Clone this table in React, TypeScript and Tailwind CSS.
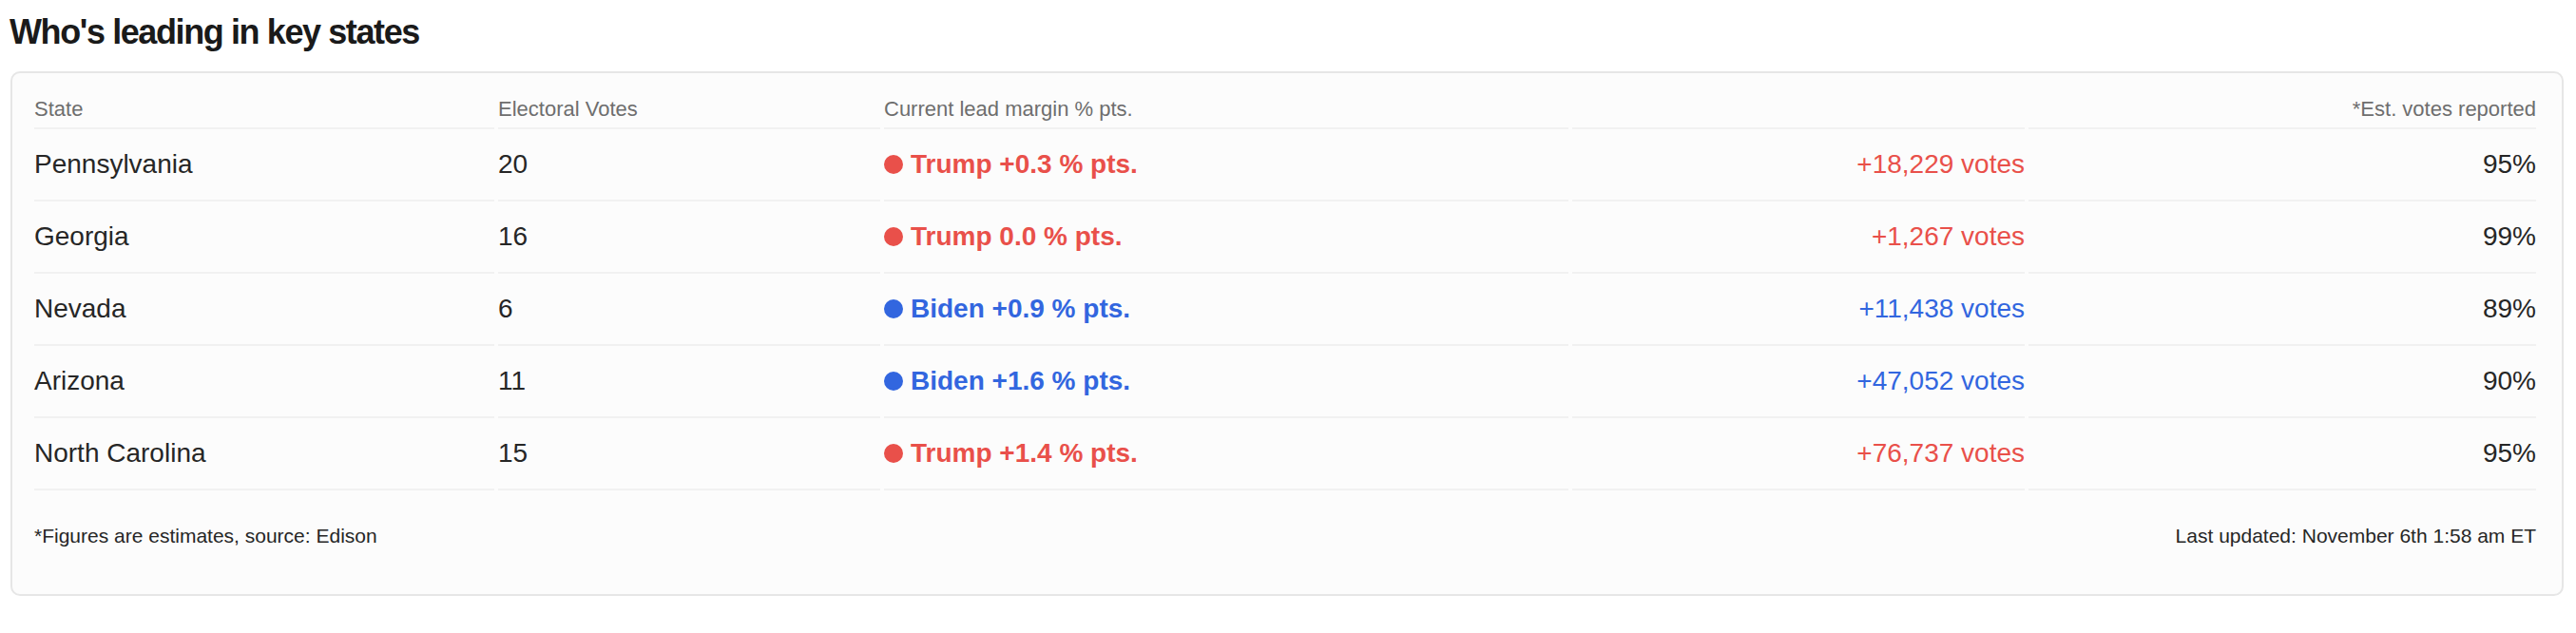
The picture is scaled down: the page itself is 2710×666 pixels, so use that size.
const rows = [
  { state: 'Pennsylvania', ev: 20, who: 'Trump', margin: '+0.3', votes: '+18,229', pct: '95%' },
  { state: 'Georgia', ev: 16, who: 'Trump', margin: '0.0', votes: '+1,267', pct: '99%' },
  { state: 'Nevada', ev: 6, who: 'Biden', margin: '+0.9', votes: '+11,438', pct: '89%' },
  { state: 'Arizona', ev: 11, who: 'Biden', margin: '+1.6', votes: '+47,052', pct: '90%' },
  { state: 'North Carolina', ev: 15, who: 'Trump', margin: '+1.4', votes: '+76,737', pct: '95%' },
];

const cell = 'h-[76px] flex items-center border-b-2 border-[#f1f1f1]';
const head = 'pb-[5px] leading-[28px] border-b-2 border-[#f1f1f1] text-[22px] text-[#6e6e6e]';

function App() {
  return (
    <div className="min-h-screen bg-white font-['Liberation_Sans',Arial,sans-serif] text-[#262626]">
      <h2 className="pl-[10px] pt-[14px] text-[36px] leading-[40px] font-bold tracking-[-1.4px] text-[#1a1a1a]">
        Who's leading in key states
      </h2>
      <div className="mt-[21px] ml-[11px] w-[2686px] rounded-[10px] border-2 border-[#e6e6e6] bg-[#fcfcfc] pl-[23px] pr-[27px] pt-[24px] pb-[47px]">
        <div className="grid grid-cols-[484px_402px_720px_476px_534px] gap-x-[4px]">
          <div className={head}>State</div>
          <div className={head}>Electoral Votes</div>
          <div className={head}>Current lead margin % pts.</div>
          <div className={head}></div>
          <div className={`${head} text-right`}>*Est. votes reported</div>
          {rows.map((r) => {
            const trump = r.who === 'Trump';
            const color = trump ? 'text-[#e9504a]' : 'text-[#3266df]';
            return (
              <div key={r.state} className="contents text-[28px]">
                <div className={cell}>{r.state}</div>
                <div className={cell}>{r.ev}</div>
                <div className={`${cell} gap-2 font-bold ${color}`}>
                  <span className={`w-5 h-5 rounded-full ${trump ? 'bg-[#e9504a]' : 'bg-[#3266df]'}`} />
                  <span>
                    {r.who} {r.margin} % pts.
                  </span>
                </div>
                <div className={`${cell} justify-end ${color}`}>{r.votes} votes</div>
                <div className={`${cell} justify-end`}>{r.pct}</div>
              </div>
            );
          })}
        </div>
        <div className="mt-[34px] flex justify-between text-[21px] leading-[28px] text-[#262626]">
          <span>*Figures are estimates, source: Edison</span>
          <span>Last updated: November 6th 1:58 am ET</span>
        </div>
      </div>
    </div>
  );
}

export default App;
